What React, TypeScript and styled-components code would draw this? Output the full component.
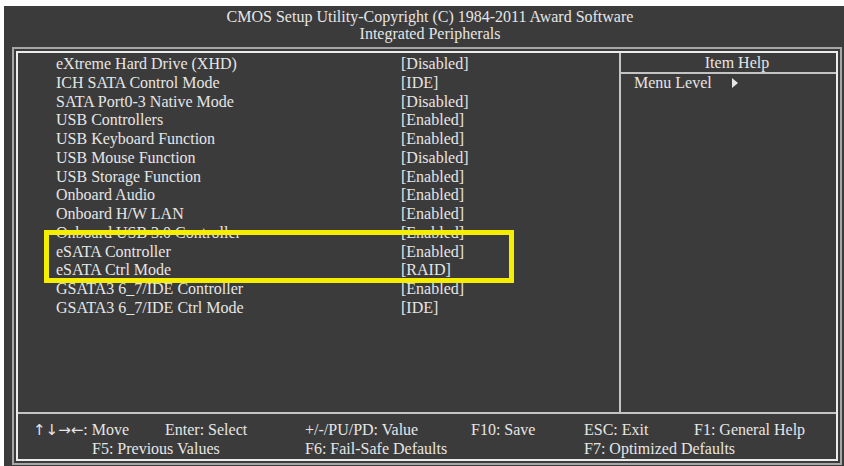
import React from 'react';
import styled, { createGlobalStyle } from 'styled-components';

const GlobalStyle = createGlobalStyle`
  html, body {
    margin: 0;
    padding: 0;
    background: #ffffff;
  }
  body {
    font-family: "Liberation Serif", "Times New Roman", serif;
  }
`;

const Screen = styled.div`
  margin: 6px 0 0 4px;
  width: 840px;
  height: 460px;
  background: #3b3b3b;
  color: #e6e6e6;
  font-size: 16px;
  display: flex;
  flex-direction: column;
`;

const Title = styled.header`
  height: 41px;
  box-sizing: border-box;
  padding: 2px 0 0 12px;
  line-height: 17px;
  text-align: center;
`;

const OuterFrame = styled.div`
  margin-left: 8px;
  width: 830px;
  height: 418px;
  box-sizing: border-box;
  border: 2px solid #a6a6a6;
  padding: 2px;
`;

const InnerFrame = styled.div`
  height: 100%;
  box-sizing: border-box;
  border: 2px solid #ececec;
  display: flex;
  flex-direction: column;
`;

const Main = styled.div`
  flex: 1;
  display: flex;
  border-bottom: 2px solid #c4c4c4;
`;

const ItemList = styled.div`
  position: relative;
  width: 603px;
  box-sizing: border-box;
  border-right: 2px solid #c4c4c4;
  padding: 2px 0 0 38px;
`;

const Row = styled.div`
  display: flex;
  height: 18.75px;
  line-height: 18.75px;
  white-space: nowrap;
`;

const Label = styled.span`
  width: 345px;
`;

const Value = styled.span``;

const Highlight = styled.div`
  position: absolute;
  left: 26px;
  top: 177px;
  width: 470px;
  height: 53px;
  box-sizing: border-box;
  border: 5px solid #f6ee00;
  pointer-events: none;
`;

const HelpPanel = styled.div`
  flex: 1;
  display: flex;
  flex-direction: column;
`;

const HelpHeader = styled.div`
  height: 19px;
  line-height: 19px;
  padding-left: 17px;
  text-align: center;
  border-bottom: 2px solid #c4c4c4;
`;

const HelpLine = styled.div`
  display: flex;
  align-items: center;
  gap: 20px;
  padding-left: 13px;
  height: 18px;
  line-height: 18px;
`;

const Footer = styled.div`
  height: 45px;
  box-sizing: border-box;
  padding: 6px 0 0 15px;
  display: grid;
  grid-template-columns: 132px 140px 166px 113px 110px 1fr;
  grid-auto-rows: 19px;
  line-height: 19px;
  white-space: nowrap;
`;

const Key = styled.span<{ $span?: number; $indent?: number }>`
  grid-column: ${(p) => (p.$span ? `span ${p.$span}` : 'auto')};
  padding-left: ${(p) => p.$indent ?? 0}px;
`;

const Arrows = styled.span`
  font-family: "DejaVu Sans", sans-serif;
  font-size: 15px;
  line-height: 19px;
`;

const items: [string, string][] = [
  ['eXtreme Hard Drive (XHD)', '[Disabled]'],
  ['ICH SATA Control Mode', '[IDE]'],
  ['SATA Port0-3 Native Mode', '[Disabled]'],
  ['USB Controllers', '[Enabled]'],
  ['USB Keyboard Function', '[Enabled]'],
  ['USB Mouse Function', '[Disabled]'],
  ['USB Storage Function', '[Enabled]'],
  ['Onboard Audio', '[Enabled]'],
  ['Onboard H/W LAN', '[Enabled]'],
  ['Onboard USB 3.0 Controller', '[Enabled]'],
  ['eSATA Controller', '[Enabled]'],
  ['eSATA Ctrl Mode', '[RAID]'],
  ['GSATA3 6_7/IDE Controller', '[Enabled]'],
  ['GSATA3 6_7/IDE Ctrl Mode', '[IDE]'],
];

const App: React.FC = () => {
  return (
    <>
      <GlobalStyle />
      <Screen>
        <Title>
          <div>CMOS Setup Utility-Copyright (C) 1984-2011 Award Software</div>
          <div>Integrated Peripherals</div>
        </Title>
        <OuterFrame>
          <InnerFrame>
            <Main>
              <ItemList>
                {items.map(([label, value]) => (
                  <Row key={label}>
                    <Label>{label}</Label>
                    <Value>{value}</Value>
                  </Row>
                ))}
                <Highlight />
              </ItemList>
              <HelpPanel>
                <HelpHeader>Item Help</HelpHeader>
                <HelpLine>
                  <span>Menu Level</span>
                  <svg width="6" height="10" viewBox="0 0 6 10">
                    <polygon points="0,0 6,5 0,10" fill="#e6e6e6" />
                  </svg>
                </HelpLine>
              </HelpPanel>
            </Main>
            <Footer>
              <Key>
                <Arrows>↑↓→←</Arrows>: Move
              </Key>
              <Key>Enter: Select</Key>
              <Key>+/-/PU/PD: Value</Key>
              <Key>F10: Save</Key>
              <Key>ESC: Exit</Key>
              <Key>F1: General Help</Key>
              <Key $span={2} $indent={59}>F5: Previous Values</Key>
              <Key $span={2}>F6: Fail-Safe Defaults</Key>
              <Key $span={2}>F7: Optimized Defaults</Key>
            </Footer>
          </InnerFrame>
        </OuterFrame>
      </Screen>
    </>
  );
};

export default App;
